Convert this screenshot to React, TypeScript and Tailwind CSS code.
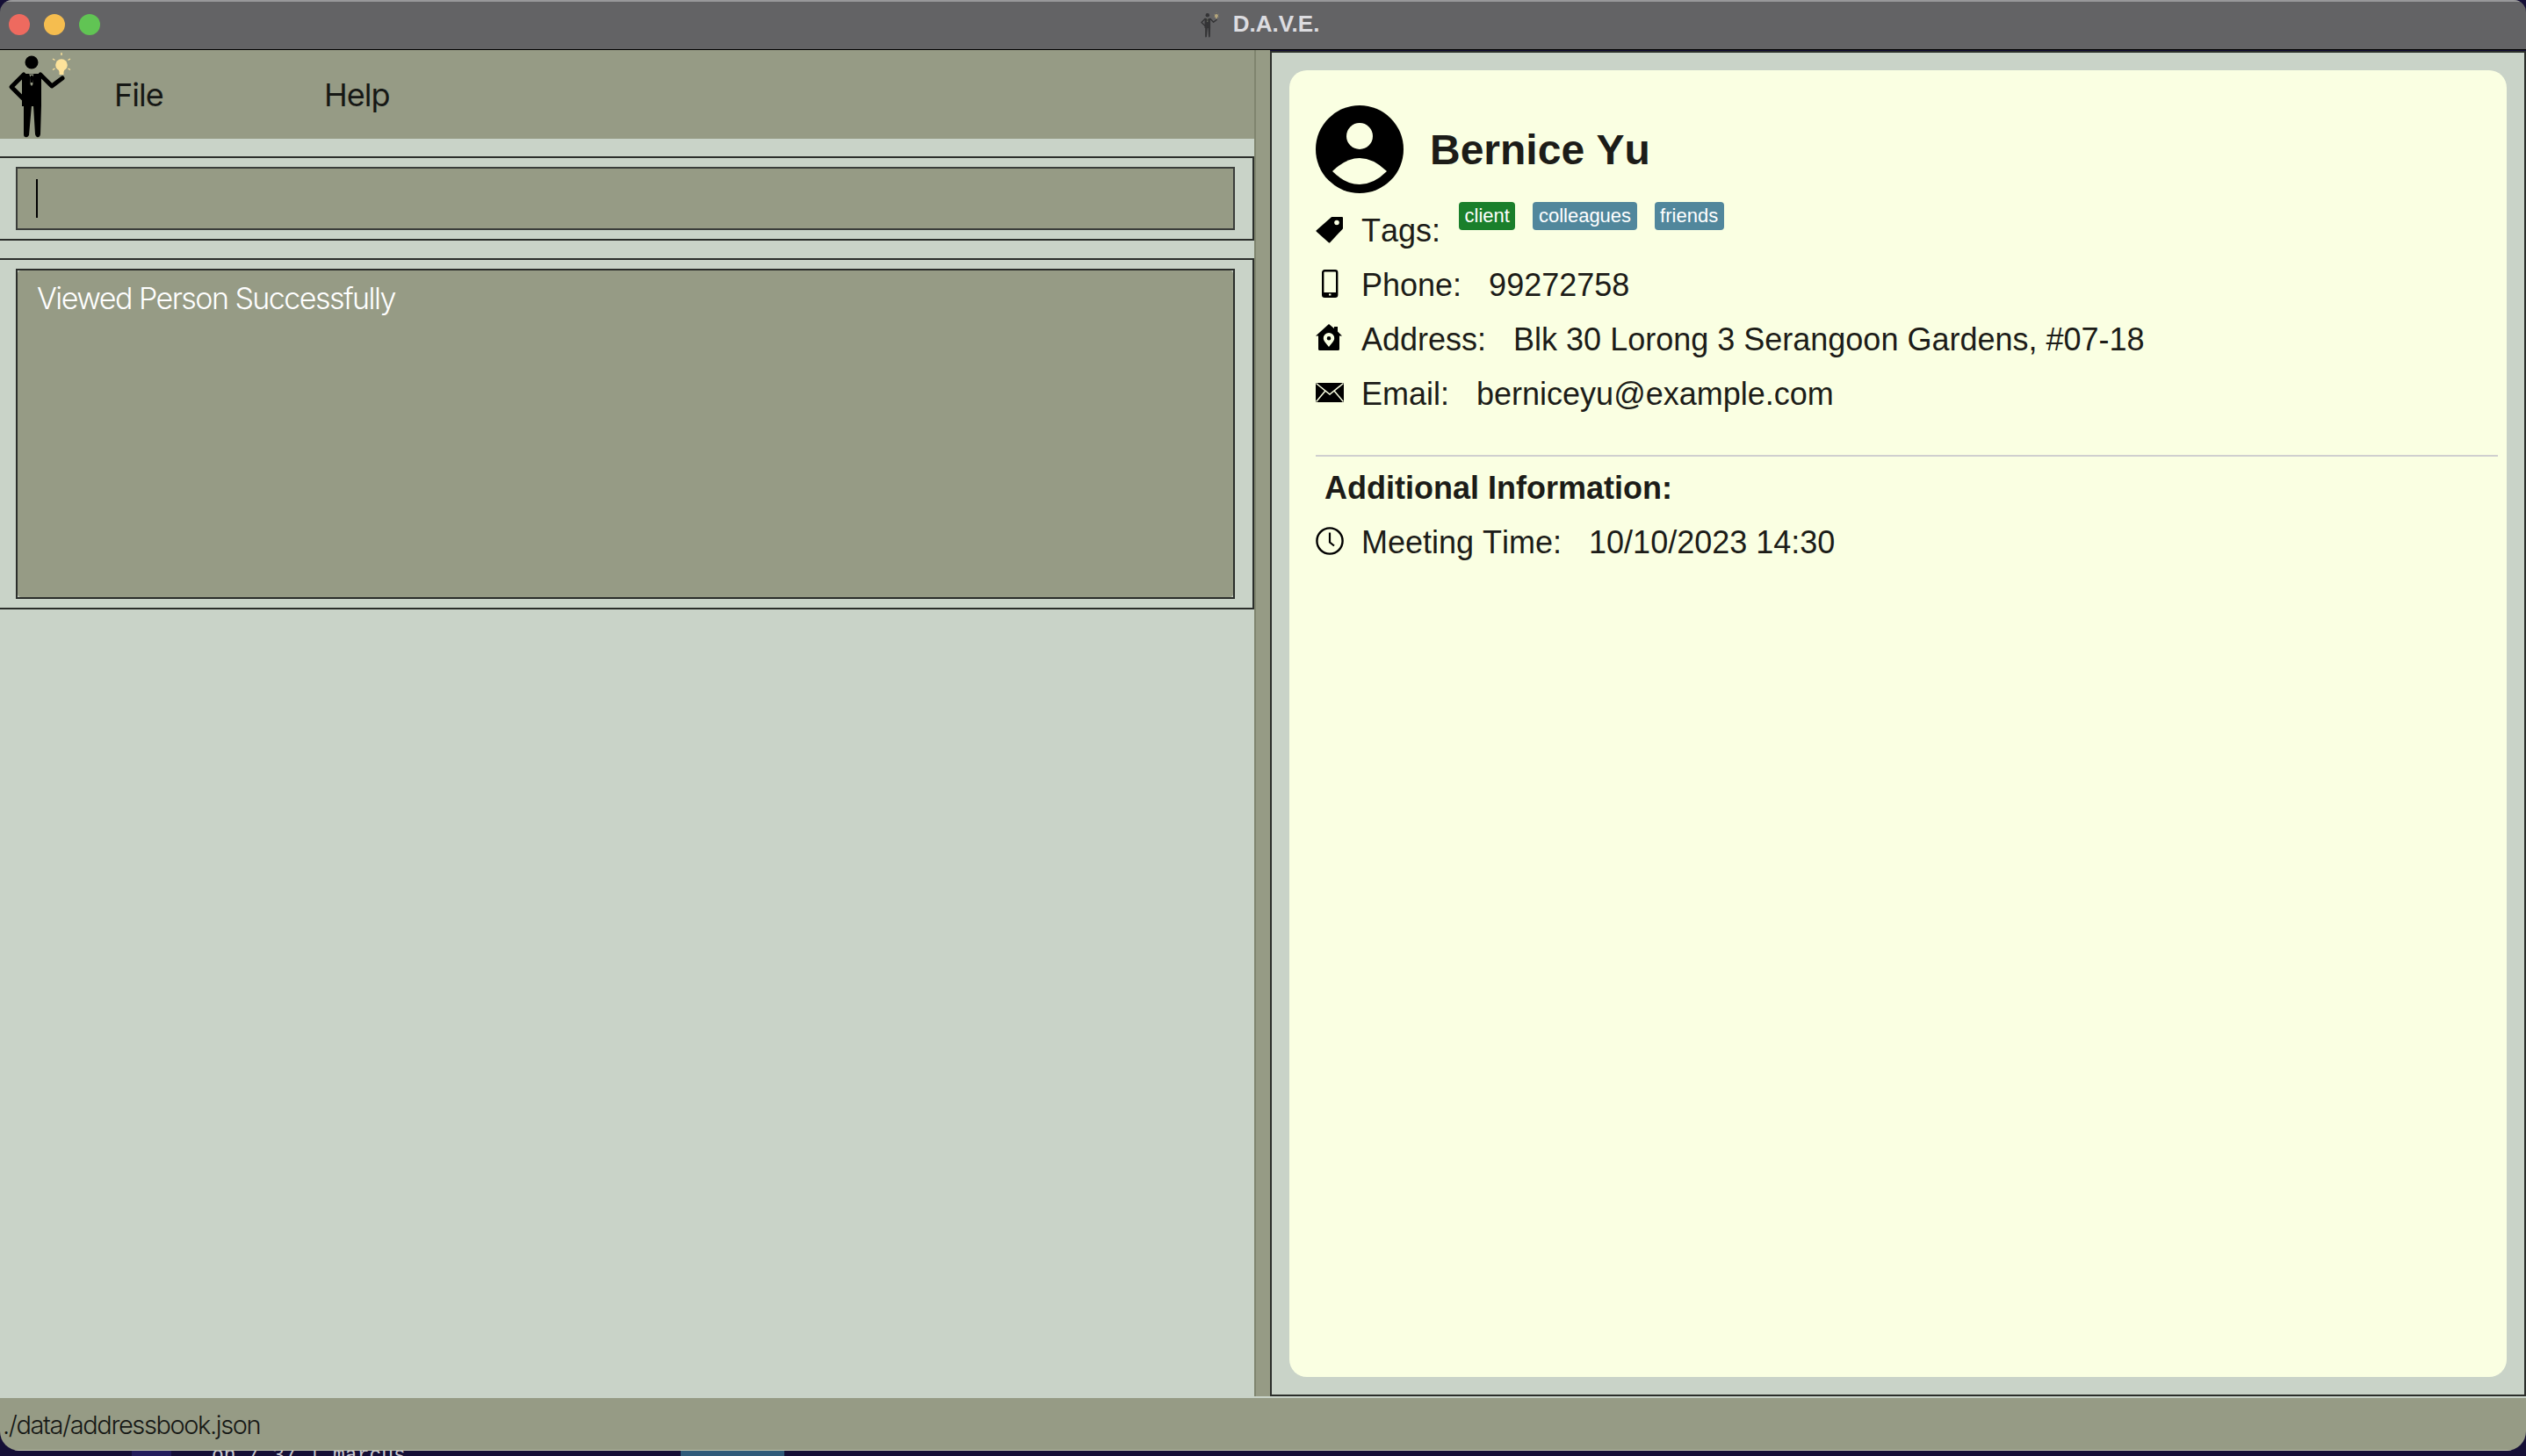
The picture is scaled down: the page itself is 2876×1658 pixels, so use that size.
import React from "react";

const Logo = ({ size, body, bulb }: { size: string; body: string; bulb: string }) => (
  <svg viewBox="0 -3 90 101" className={size}>
    <circle cx="36" cy="11" r="7.5" fill={body} />
    <path d="M25 24 H47 V61 H25 Z" fill={body} />
    <path d="M27 25 L13 39 L26 52" fill="none" stroke={body} strokeWidth="5" strokeLinejoin="round" strokeLinecap="round" />
    <path d="M46 25 L59 38 L71 29" fill="none" stroke={body} strokeWidth="5" strokeLinejoin="round" strokeLinecap="round" />
    <path d="M27 60 H36 L33 94 Q31 97 29 96 Q27 96 27 93 Z" fill={body} />
    <path d="M38 60 H47 L46 93 Q45 97 42 96 Q41 96 40 93 Z" fill={body} />
    <path d="M33 24.5 H38.5 L36.8 28 L37.5 36 L36 38 L34.5 36 L35 28 Z" fill="#969b85" />
    <path d="M35 26 H37 V34 H35 Z" fill={body} />
    <circle cx="70" cy="14" r="6.8" fill={bulb} />
    <path d="M66 17 H74 L72.5 22 V25 H67.5 V22 Z" fill={bulb} />
    <path d="M70 0 V3 M60 7 L62.5 8.5 M80 7 L77.5 8.5 M60 19.5 L62.5 18 M80 19.5 L77.5 18" stroke={bulb} strokeWidth="1.4" />
  </svg>
);

const TagIcon = () => (
  <svg viewBox="0 0 32 32" className="w-[32px] h-[32px]">
    <path d="M1.5 18 L18.5 3 H30 V15 L15.5 30.5 Z" fill="#000" stroke="#000" strokeWidth="2" strokeLinejoin="round" />
    <circle cx="24" cy="8.5" r="2.8" fill="#faffe2" />
  </svg>
);

const PhoneIcon = () => (
  <svg viewBox="0 0 32 32" className="w-[32px] h-[32px]">
    <rect x="8.2" y="1.2" width="16" height="29.6" rx="2" fill="none" stroke="#000" strokeWidth="2.4" />
    <rect x="8.2" y="26" width="16" height="5" fill="#000" />
    <rect x="15" y="27.5" width="2.4" height="2" fill="#faffe2" />
  </svg>
);

const HouseIcon = () => (
  <svg viewBox="0 0 32 32" className="w-[32px] h-[32px]">
    <path d="M15 0 L21 5 V3 H25 V8.5 L30 13.5 H27 V28.5 Q27 30 25.5 30 H4.5 Q3 30 3 28.5 V13.5 H0 Z" fill="#000" />
    <path fillRule="evenodd" d="M15 10 A6.2 6.2 0 0 1 21.2 16.2 C21.2 19.5 17 23 15 26 C13 23 8.8 19.5 8.8 16.2 A6.2 6.2 0 0 1 15 10 Z M15 14 A2.3 2.3 0 1 0 15 18.6 A2.3 2.3 0 1 0 15 14 Z" fill="#faffe2" />
  </svg>
);

const MailIcon = () => (
  <svg viewBox="0 0 32 32" className="w-[32px] h-[32px]">
    <rect x="0" y="5" width="32" height="22" fill="#000" />
    <path d="M0.5 5.5 L16 18 L31.5 5.5 M0.5 26.5 L11 14 M31.5 26.5 L21 14" fill="none" stroke="#faffe2" strokeWidth="1.5" />
  </svg>
);

const ClockIcon = () => (
  <svg viewBox="0 0 32 32" className="w-[32px] h-[32px]">
    <circle cx="16" cy="16" r="14.6" fill="none" stroke="#000" strokeWidth="2.4" />
    <path d="M16 6.5 V17.5 L21 21.5" fill="none" stroke="#000" strokeWidth="2.2" />
  </svg>
);

const Row = ({ icon, label, value }: { icon: React.ReactNode; label: string; value: string }) => (
  <div className="flex items-center h-[62px] leading-[62px] text-[36px]">
    <span className="w-[32px] mr-[20px] mb-[4px] shrink-0">{icon}</span>
    <span className="mr-[31px]">{label}</span>
    <span>{value}</span>
  </div>
);

export default function App() {
  return (
    <div className="w-[2876px] h-[1658px] bg-[#150f36] overflow-hidden font-['Liberation_Sans',sans-serif]">
      <div className="h-[1652px] flex flex-col rounded-t-[14px] rounded-b-[22px] overflow-hidden">
        <div className="h-[57px] shrink-0 grid grid-cols-[1fr_auto_1fr] items-center bg-[#636365] border-t-2 border-t-[#98989a] border-b border-b-black pb-[3px]">
          <div className="flex gap-[16px] pl-[10px] pt-[1px]">
            <span className="w-[24px] h-[24px] rounded-full bg-[#ee6a5f]" />
            <span className="w-[24px] h-[24px] rounded-full bg-[#f5bd4f]" />
            <span className="w-[24px] h-[24px] rounded-full bg-[#61c454]" />
          </div>
          <div className="flex items-center gap-[13px] pr-[10px]">
            <Logo size="w-[27px] h-[30px]" body="#343436" bulb="#b5a67c" />
            <span className="text-[26px] font-bold text-[#dcdce0]">D.A.V.E.</span>
          </div>
          <div />
        </div>

        <div className="flex h-[1533px] shrink-0">
          <div className="w-[1428px] shrink-0 bg-[#c9d3c8] font-['Inter',sans-serif]">
            <div className="h-[101px] flex items-start bg-[#969b85] text-[#161815]">
              <Logo size="w-[90px] h-[101px] shrink-0" body="#000" bulb="#fde29a" />
              <div className="ml-[40px] w-[239px] pt-[27px] text-[36px] leading-[48px] tracking-[-1px]">File</div>
              <div className="pt-[27px] text-[36px] leading-[48px] tracking-[-1px]">Help</div>
            </div>
            <div className="mt-[20px] h-[96px] border-y-2 border-r-2 border-[#2b2e2b] pl-[18px] pr-[20px] py-[10px]">
              <div className="h-[72px] flex items-center bg-[#969b85] border-2 border-[#3a3d3a] pl-[21px]">
                <div className="w-[2px] h-[44px] bg-black" />
              </div>
            </div>
            <div className="mt-[20px] h-[400px] border-y-2 border-r-2 border-[#2b2e2b] pl-[18px] pr-[20px] py-[10px]">
              <div className="h-[376px] border-2 border-[#2b2e2b] bg-[#c9d3c8]">
                <div className="h-full bg-[#969b85] rounded-[4px] pl-[22px] pt-[11px] text-[34px] leading-[41px] tracking-[-1.55px] font-light text-white">
                  Viewed Person Successfully
                </div>
              </div>
            </div>
          </div>

          <div className="w-[18px] shrink-0 bg-[#969b85] border-l-2 border-l-[#7f846e]" />

          <div className="flex-1 mt-px bg-[#c9d3c8] border-2 border-[#2b2e2b] p-[20px] flex">
            <div className="flex-1 rounded-[20px] bg-[#faffe2] pl-[30px] pr-[10px] pt-[40px] text-[#1c1c18] [font-kerning:none]">
              <div className="flex items-center gap-[30px] h-[100px] mb-[12px]">
                <svg viewBox="0 0 100 100" className="w-[100px] h-[100px]">
                  <circle cx="50" cy="50" r="50" fill="#000" />
                  <circle cx="50" cy="35" r="15" fill="#faffe2" />
                  <path d="M19 75 Q50 45 81 75 Q66 90 50 90 Q34 90 19 75 Z" fill="#faffe2" />
                </svg>
                <span className="text-[48px] font-bold pt-[2px]">Bernice Yu</span>
              </div>
              <div className="flex items-start h-[62px] text-[36px] leading-[62px]">
                <span className="w-[32px] mr-[20px] mt-[13px] shrink-0"><TagIcon /></span>
                <span className="mr-[21px]">Tags:</span>
                <div className="flex gap-[20px] -mt-[2px] text-[22px] leading-[32px] text-white">
                  <span className="px-[6.5px] rounded-[4px] bg-[#1a7f2b]">client</span>
                  <span className="px-[6.5px] rounded-[4px] bg-[#51879c]">colleagues</span>
                  <span className="px-[6.5px] rounded-[4px] bg-[#51879c]">friends</span>
                </div>
              </div>
              <Row icon={<PhoneIcon />} label="Phone:" value="99272758" />
              <Row icon={<HouseIcon />} label="Address:" value="Blk 30 Lorong 3 Serangoon Gardens, #07-18" />
              <Row icon={<MailIcon />} label="Email:" value="berniceyu@example.com" />
              <div className="h-[2px] bg-[#cfcfcf] mt-[38px]" />
              <div className="h-[67px] pl-[10px] pt-[3px] text-[36px] leading-[66px] font-bold">Additional Information:</div>
              <Row icon={<ClockIcon />} label="Meeting Time:" value="10/10/2023 14:30" />
            </div>
          </div>
        </div>

        <div className="flex-1 bg-[#969b85] border-t-2 border-t-[#c9d3c8] border-b border-b-[#bfc4ae] pl-[3px] pt-[11px] text-[29px] leading-[40px] tracking-[-1.4px] font-light text-[#161815] font-['Inter',sans-serif]">
          ./data/addressbook.json
        </div>
      </div>
      <div className="h-[6px] overflow-hidden flex">
        <div className="ml-[150px] w-[45px] h-full bg-[#231d5c]" />
        <div className="ml-[46px] -mt-[6px] text-[23px] leading-[24px] text-[#c9c9d0] font-['Liberation_Mono',monospace] whitespace-pre">on / 37 | marcus</div>
        <div className="ml-[313px] w-[118px] h-full bg-[#2f5a7a]" />
      </div>
    </div>
  );
}
